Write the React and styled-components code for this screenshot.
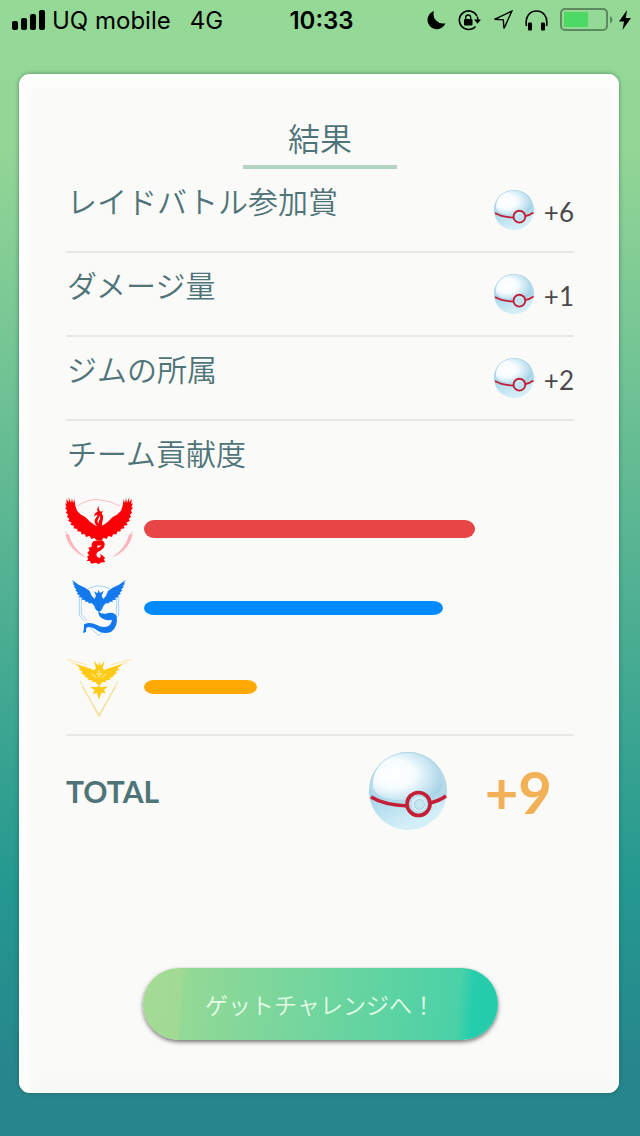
import React from 'react'
import { styled, createGlobalStyle } from 'styled-components'

const GlobalStyle = createGlobalStyle`
* {
  box-sizing: border-box;
}

body {
  margin: 0;
  font-family: Lato, "Noto Sans CJK JP", sans-serif;
}
`

const Page = styled.div`
display: flex;
flex-direction: column;
min-height: 100vh;
padding-bottom: 43px;
background: linear-gradient(#95d997 0%, #93d696 13%, #249890 78%, #27868c 94%);
`

const StatusBar = styled.header`
display: grid;
grid-template-columns: 1fr auto 1fr;
align-items: center;
height: 40px;
padding: 0 9px 0 12px;
font-family: Inter, sans-serif;
font-size: 24px;
color: #000;
`

const StatusGroup = styled.div`
display: flex;
align-items: center;
justify-content: ${(props) => props.$end ? 'flex-end' : 'flex-start'};
gap: ${(props) => props.$gap}px;
white-space: nowrap;
`

const Network = styled.span`
padding-left: 12px;
`

const Clock = styled.time`
font-weight: 600;
`

const Card = styled.main`
display: flex;
flex: 1;
flex-direction: column;
margin: 34px 21px 0 19px;
padding: 43px 45px 53px 47px;
border-radius: 11px;
background: linear-gradient(#ffffff, #fafaf8 22px, #fafaf8 1000px, #f6f8f4);
box-shadow: 0 0 4px rgba(30, 80, 70, 0.6), inset 14px 0 20px -8px #ffffff, inset -8px 0 12px -6px #ffffff;
color: #4f7478;
`

const Title = styled.h1`
align-self: center;
width: 154px;
height: 52px;
margin: 0;
border-bottom: 4px solid #b2d3c1;
font-size: 32px;
font-weight: 350;
line-height: 44px;
text-align: center;
`

const Row = styled.div`
display: flex;
align-items: center;
justify-content: space-between;
height: 84px;
border-bottom: 2px solid #e8e9e7;
`

const Label = styled.h2`
margin: 0;
padding: 0 0 18px 1px;
font-size: 30px;
font-weight: 350;
line-height: 40px;
`

const Reward = styled.div`
display: flex;
align-items: center;
gap: 10px;
font-size: 26px;
color: #4a4a4a;
`

const Amount = styled.span`
padding-top: 4px;
`

const TeamSection = styled.section`
padding-bottom: 8px;
border-bottom: 2px solid #e8e9e7;
`

const TeamHeading = styled(Label)`
padding: 12px 0 16px 1px;
`

const TeamRow = styled.div`
display: flex;
align-items: center;
gap: 12px;
height: 79px;
`

const Emblem = styled.svg`
flex: none;
width: 66px;
height: 70px;
overflow: visible;
`

const Track = styled.div`
flex: 1;
`

const Bar = styled.div`
height: ${(props) => props.$thick ? 18 : 14}px;
border-radius: 10px / 50%;
background: ${(props) => props.$color};
`

const TotalRow = styled.div`
display: flex;
align-items: center;
height: 110px;
padding-right: 22px;
`

const TotalLabel = styled.h2`
flex: 1;
margin: 0;
font-size: 30px;
font-weight: 700;
`

const TotalValue = styled.strong`
margin-left: 38px;
padding-top: 2px;
font-size: 58px;
font-weight: 700;
line-height: 60px;
color: #f2b057;
`

const Button = styled.button`
align-self: center;
width: 355px;
max-width: 100%;
height: 72px;
margin-top: auto;
border: none;
border-radius: 36px;
background: linear-gradient(95deg, #a3db93 0%, #a0da94 11%, #94d996 12%, #4bd1a7 88%, #27cdac 92%, #23ccac 100%);
box-shadow: 0 2px 4px rgba(0, 0, 0, 0.55);
color: #e4fbe6;
font-family: inherit;
font-size: 23px;
font-weight: 350;
cursor: pointer;
`

const Signal = () => (
  <svg width="33" height="20" viewBox="0 0 33 20">
    <rect x="0" y="11" width="6" height="9" rx="2" />
    <rect x="9" y="8" width="6" height="12" rx="2" />
    <rect x="18" y="4" width="6" height="16" rx="2" />
    <rect x="27" y="0" width="6" height="20" rx="2" />
  </svg>
)

const Moon = () => (
  <svg width="19" height="20" viewBox="0 0 19 20">
    <path d="M7 1A9.300 9.300 0 1 0 18.500 13.200A9.500 9.500 0 0 1 7 1Z" />
  </svg>
)

const RotationLock = () => (
  <svg width="23" height="21" viewBox="0 0 23 21">
    <path d="M18.900 6A9.300 9.300 0 1 0 17.500 16.500M19.200 6.500Q19.800 8 19.800 10" fill="none" stroke="#000" strokeWidth="1.600" />
    <path d="M16 9.500H23L19.500 13.800Z" />
    <rect x="6" y="9" width="8.500" height="6.500" rx="1" />
    <path d="M7.700 9.500V7.500a2.500 2.500 0 0 1 5 0V9.500" fill="none" stroke="#000" strokeWidth="1.300" />
  </svg>
)

const Arrow = () => (
  <svg width="20" height="20" viewBox="0 0 20 20">
    <path d="M18.800 1.200L1.500 9.300L10.300 9.800L11 18.500Z" fill="none" stroke="#000" strokeWidth="1.400" />
  </svg>
)

const Headphones = () => (
  <svg width="23" height="21" viewBox="0 0 23 21">
    <path d="M1.500 16C-2.500 -4 25.500 -4 21.500 16" fill="none" stroke="#000" strokeWidth="1.600" />
    <rect x="3" y="12.500" width="4" height="8" rx="1" />
    <rect x="16" y="12.500" width="4" height="8" rx="1" />
  </svg>
)

const Battery = () => (
  <svg width="53" height="24" viewBox="0 0 53 24">
    <rect x="1" y="1" width="46" height="21" rx="4" fill="none" stroke="#5b8a5f" strokeWidth="2" />
    <rect x="4" y="4" width="24" height="15" fill="#4cd964" />
    <path d="M50 8Q52.500 9 52.500 11.500T50 15.500Z" fill="#5b8a5f" />
  </svg>
)

const Bolt = () => (
  <svg width="12" height="20" viewBox="0 0 12 20">
    <path d="M8 0L0 11.500H5L3.500 20L12 8H6.800Z" />
  </svg>
)

const Ball = ({ id, size }) => (
  <svg width={size} height={size} viewBox="0 0 78 78">
    <defs>
      <radialGradient id={`${id}-top`} cx="0.300" cy="0.450" r="0.750">
        <stop offset="0" stopColor="#ffffff" />
        <stop offset="0.400" stopColor="#f6fcfe" />
        <stop offset="0.750" stopColor="#c5e4f1" />
        <stop offset="1" stopColor="#a4d1e6" />
      </radialGradient>
      <linearGradient id={`${id}-base`} x1="0" y1="0.300" x2="0.300" y2="1">
        <stop offset="0" stopColor="#8fc3dc" />
        <stop offset="0.600" stopColor="#b9e0ef" />
        <stop offset="1" stopColor="#d2eef7" />
      </linearGradient>
      <clipPath id={`${id}-clip`}>
        <circle cx="39" cy="39" r="39" />
      </clipPath>
    </defs>
    <g clipPath={`url(#${id}-clip)`}>
      <rect width="78" height="78" fill={`url(#${id}-base)`} />
      <path d="M0 0H78V44Q62 52 45 51Q18 52 1 41Z" fill="#b4dae9" />
      <path d="M4 36C2 14 20 1 39 1C58 1 74 17 73 34C71 45 55 48 41 47C25 50 8 46 4 36Z" fill={`url(#${id}-top)`} />
    </g>
    <path d="M2 45Q15 53 39 54M61 51Q70 49 77 44" fill="none" stroke="#c51f38" strokeWidth="3.600" />
    <circle cx="49.500" cy="52" r="11.500" fill="#b8ddeb" stroke="#c51f38" strokeWidth="3.600" />
    <circle cx="50" cy="52" r="7.500" fill="#d8eff7" />
    <circle cx="50.500" cy="52.500" r="5" fill="#c4e5f1" stroke="#9fcfe3" strokeWidth="1" />
  </svg>
)

const redWing = 'M149 139L136 134L122 124L108 110L95 103L83 91L78 76L75 57L71 68L68 54L65 67L58 51L59 66L51 56L52 71L47 69L52 81L47 82L54 92L49 96L57 104L52 108L60 116L56 121L67 127L63 133L75 137L72 144L84 146L84 153L95 154L96 162L107 162L110 170L121 167L126 176L135 172L141 180L149 181Z'
const blueWing = 'M149 386L141 374L138 359L127 346L121 332L107 322L88 313L68 299L74 310L69 309L78 319L72 318L82 328L77 329L86 337L82 340L92 346L88 350L100 353L96 358L108 359L106 364L118 364L116 369L128 369L137 380L145 391Z'
const yellowWing = 'M149 588L143 573L128 566L109 559L79 550L94 564L86 564L101 575L94 576L108 586L104 588L118 593L114 598L130 599L126 604L138 604L149 616Z'

const Valor = () => (
  <Emblem viewBox="50 41 198 210" role="img" aria-label="Valor">
    <path d="M84 77Q115 55 149 58T212 77" fill="none" stroke="#ffb9bd" strokeWidth="3" />
    <path d="M49 152Q55 210 106 229M249 152Q243 210 192 229" fill="none" stroke="#fbc3c8" strokeWidth="3" />
    <path d="M48 164Q63 212 106 227Q69 203 58 160M250 164Q235 212 192 227Q229 203 240 160" fill="#fbb5bb" />
    <g fill="#fb0007">
      <path d={redWing} />
      <path d={redWing} transform="translate(298 0) scale(-1 1)" />
      <path d="M149 75Q145 86 154 94L162 92L157 99Q164 108 160 119L157 140L164 150H136L144 138Q133 129 137 117L145 105Q137 101 134 109Q134 97 145 94Q141 86 149 75Z" />
      <path d="M133 182L159 180Q170 188 164 201Q157 211 145 215Q138 222 144 230L151 233L155 227L150 221L159 225L168 234L163 237L168 245L152 247L149 252L140 247L126 250L121 242L112 242L117 235L113 229L119 225L114 216L121 211L117 202L127 199L127 190Z" />
    </g>
    <path d="M149 106Q155 112 150 120Q146 126 148 131Q142 127 145 119Q150 113 149 106ZM144 203Q153 202 156 194Q149 198 144 195Z" fill="#fafaf8" />
  </Emblem>
)

const Mystic = () => (
  <Emblem viewBox="50 278 198 210" role="img" aria-label="Mystic">
    <path d="M114 327Q149 306 184 327M90 348V405L106 423M119 439L149 466L208 405V348M96 353V402L112 419M202 353V402L187 418" fill="none" stroke="#a9d3fa" strokeWidth="3" />
    <g fill="#1479ed">
      <path d={blueWing} />
      <path d={blueWing} transform="translate(297 0) scale(-1 1)" />
      <path d="M148 329L152 338L163 332L157 346L164 361L157 370L160 384Q154 394 149 394Q140 392 136 382L140 369L133 360L140 346L134 333L144 339Z" />
      <path d="M147 391Q151 401 169 400Q192 392 202 407Q207 438 186 454Q164 463 145 451Q129 437 113 441Q108 446 110 455L101 458Q105 445 104 432Q122 424 141 433Q161 445 178 437Q188 430 187 418Q173 423 158 414Q146 407 147 391Z" />
    </g>
  </Emblem>
)

const Instinct = () => (
  <Emblem viewBox="50 514 198 210" role="img" aria-label="Instinct">
    <path d="M51 536L112 552M247 536L186 552M63 546L88 553M235 546L210 553" fill="none" stroke="#fbe6a4" strokeWidth="3" />
    <path d="M93 603L149 708L205 603M100 620L149 702L198 620" fill="none" stroke="#f6dd8f" strokeWidth="3" />
    <g fill="#fdcb16">
      <path d={yellowWing} />
      <path d={yellowWing} transform="translate(298 0) scale(-1 1)" />
      <path d="M134 540L147 555L150 543L154 555L166 540L160 563L169 574L158 585L149 613L140 586L129 573L140 563Z" />
      <path d="M149 615L156 620L176 617L164 628L169 637L156 636L149 657L143 637L130 639L136 629L122 618L142 620Z" />
    </g>
    <path d="M149 568V590M141 578L147 582M158 578L151 582M127 579L140 590M171 579L158 590" stroke="#fff3bf" strokeWidth="3" />
  </Emblem>
)

const rewards = [
  { id: 'raid', label: 'レイドバトル参加賞', amount: '+6' },
  { id: 'damage', label: 'ダメージ量', amount: '+1' },
  { id: 'gym', label: 'ジムの所属', amount: '+2' },
]

const teams = [
  { id: 'valor', Logo: Valor, color: '#e84646', share: 77, thick: true },
  { id: 'mystic', Logo: Mystic, color: '#008aff', share: 69.5 },
  { id: 'instinct', Logo: Instinct, color: '#ffa905', share: 26.3 },
]

const App = () => {
  return (
    <Page>
      <GlobalStyle />
      <StatusBar>
        <StatusGroup $gap={7}>
          <Signal />
          <span>UQ mobile</span>
          <Network>4G</Network>
        </StatusGroup>
        <Clock>10:33</Clock>
        <StatusGroup $end $gap={12}>
          <Moon />
          <RotationLock />
          <Arrow />
          <Headphones />
          <StatusGroup $gap={6}>
            <Battery />
            <Bolt />
          </StatusGroup>
        </StatusGroup>
      </StatusBar>

      <Card>
        <Title>結果</Title>
        {rewards.map((item) => (
          <Row key={item.id}>
            <Label>{item.label}</Label>
            <Reward>
              <Ball id={item.id} size={40} />
              <Amount>{item.amount}</Amount>
            </Reward>
          </Row>
        ))}

        <TeamSection>
          <TeamHeading>チーム貢献度</TeamHeading>
          {teams.map(({ id, Logo, color, share, thick }) => (
            <TeamRow key={id}>
              <Logo />
              <Track>
                <Bar $color={color} $thick={thick} style={{ width: `${share}%` }} />
              </Track>
            </TeamRow>
          ))}
        </TeamSection>

        <TotalRow>
          <TotalLabel>TOTAL</TotalLabel>
          <Ball id="total" size={78} />
          <TotalValue>+9</TotalValue>
        </TotalRow>

        <Button type="button">ゲットチャレンジへ！</Button>
      </Card>
    </Page>
  )
}

export default App
